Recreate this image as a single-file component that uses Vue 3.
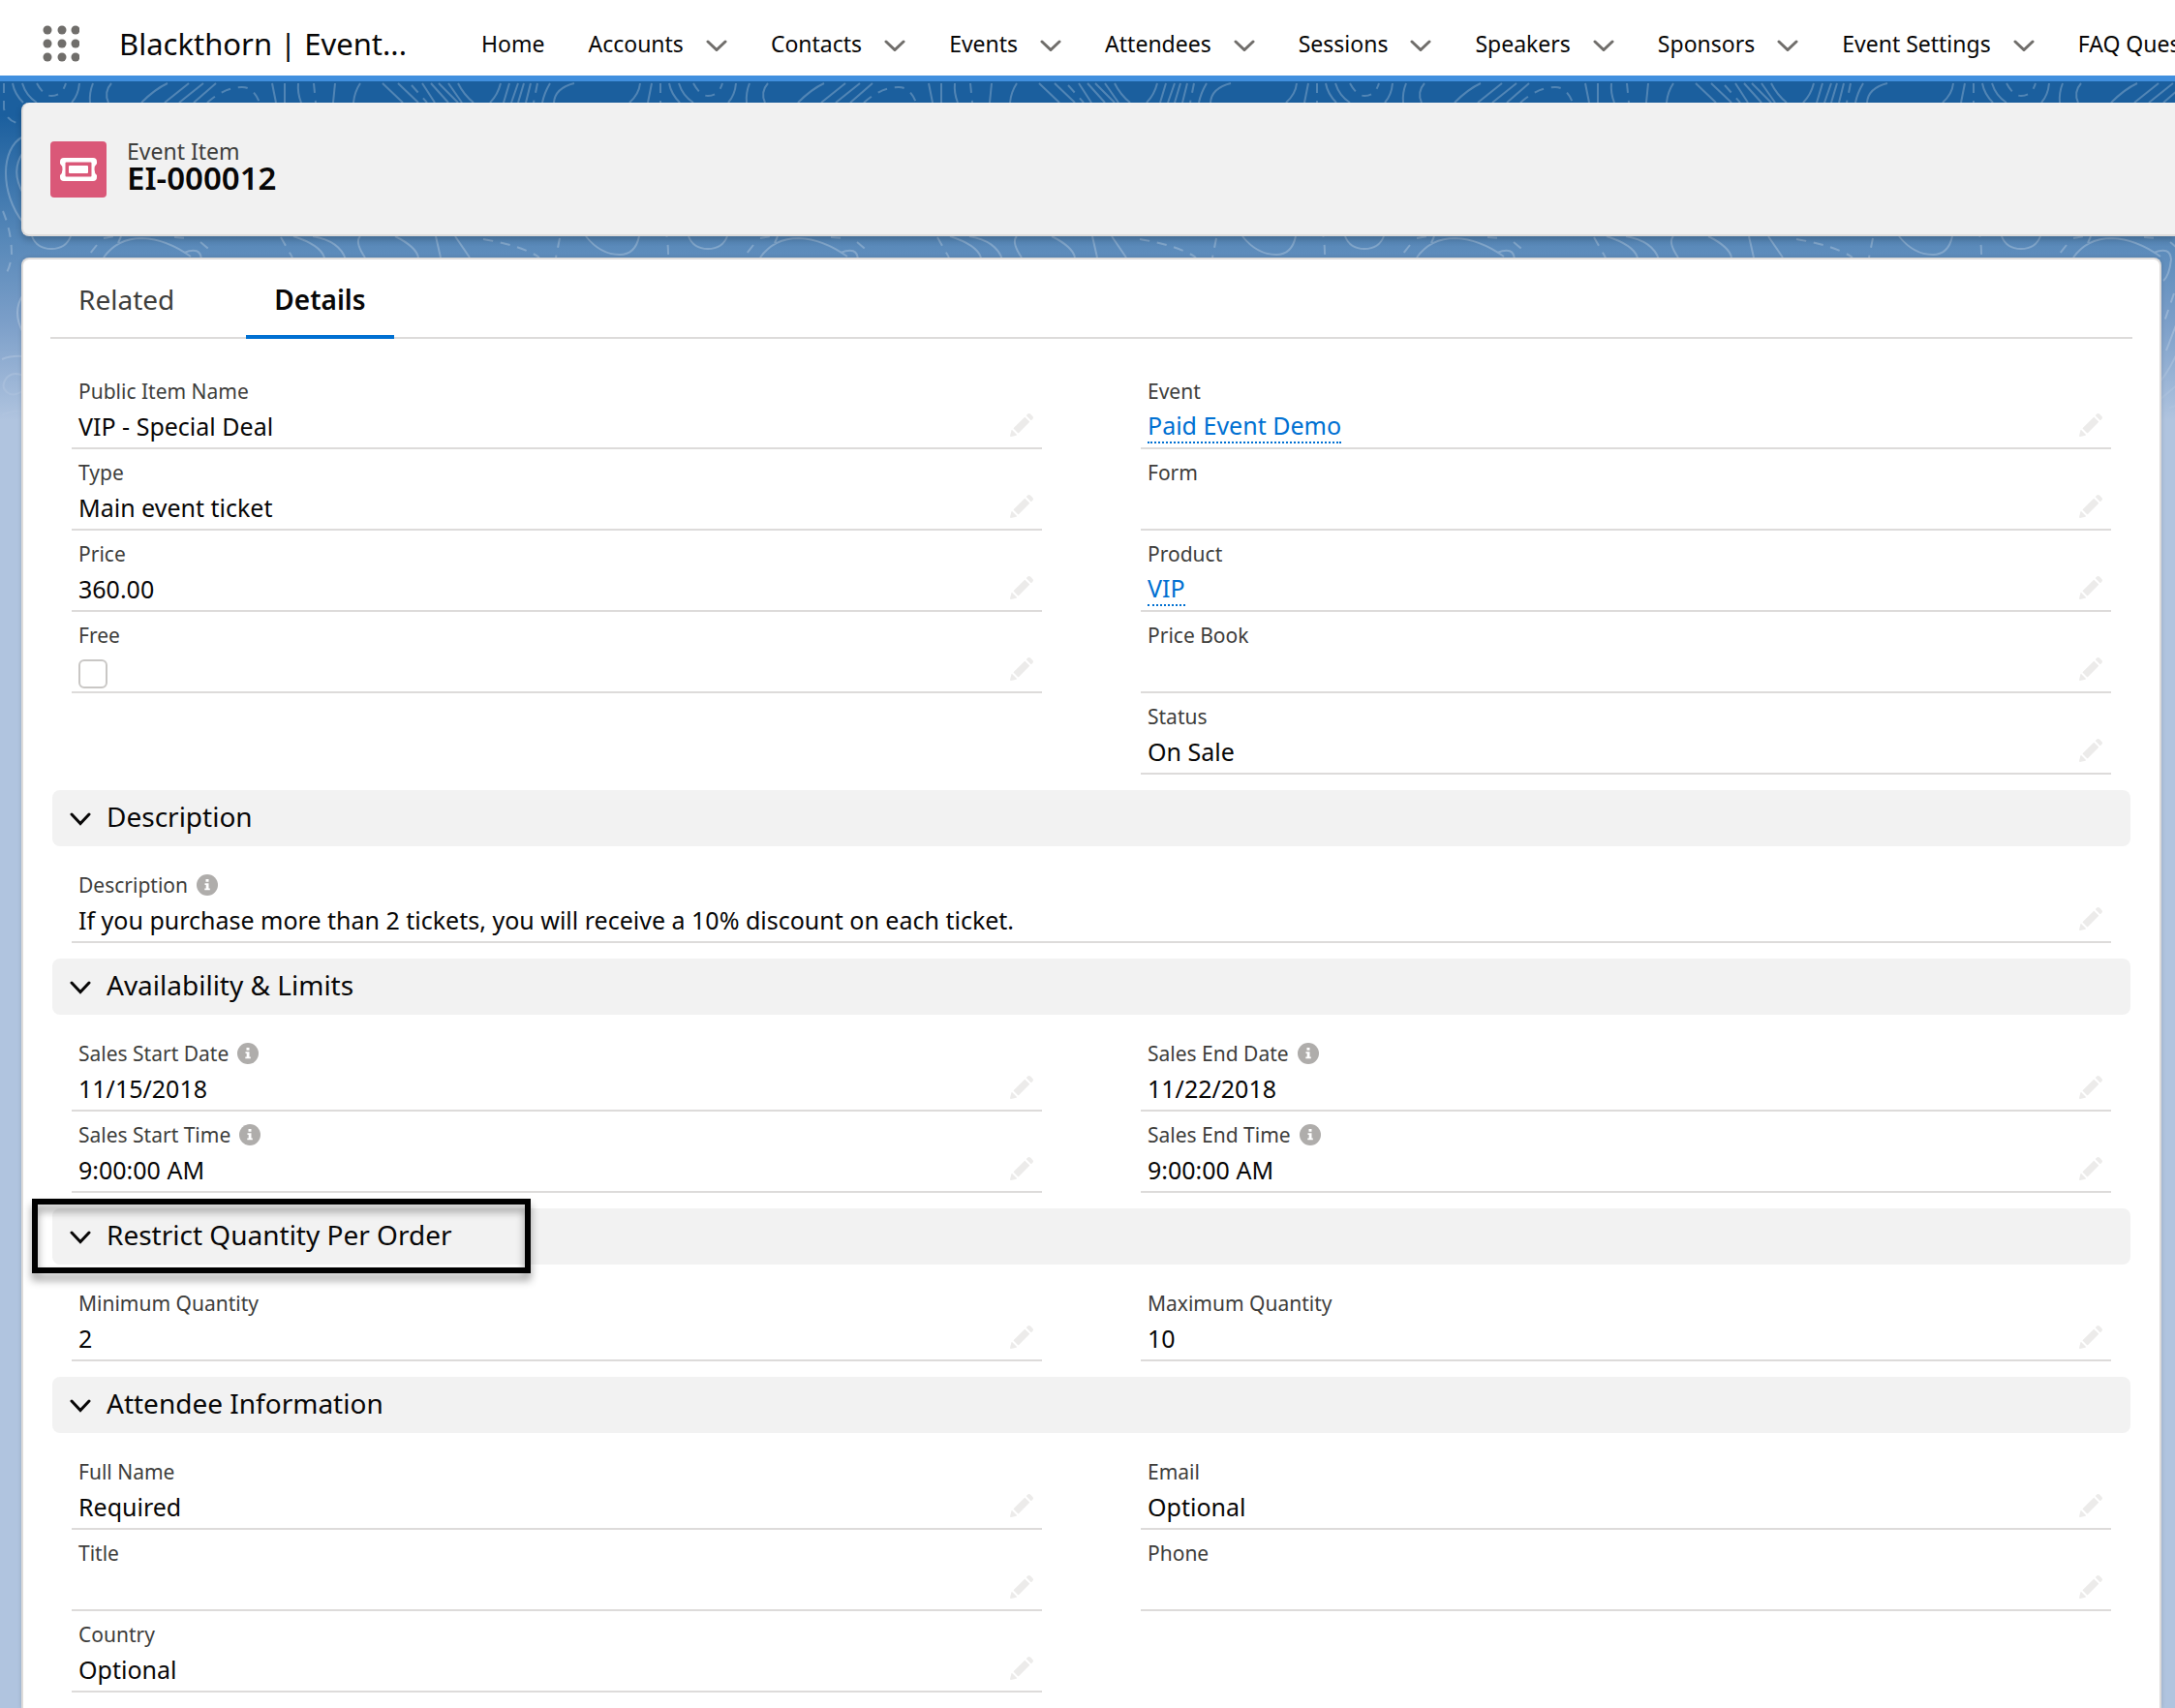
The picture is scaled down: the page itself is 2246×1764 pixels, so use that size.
<script setup>
import { ref } from 'vue'

const navItems = [
  { label: 'Home' },
  { label: 'Accounts', menu: true },
  { label: 'Contacts', menu: true },
  { label: 'Events', menu: true },
  { label: 'Attendees', menu: true },
  { label: 'Sessions', menu: true },
  { label: 'Speakers', menu: true },
  { label: 'Sponsors', menu: true },
  { label: 'Event Settings', menu: true },
  { label: 'FAQ Questions', menu: true },
]

const free = ref(false)

const sections = [
  {
    columns: [
      [
        { label: 'Public Item Name', value: 'VIP - Special Deal' },
        { label: 'Type', value: 'Main event ticket' },
        { label: 'Price', value: '360.00' },
        { label: 'Free', kind: 'checkbox' },
      ],
      [
        { label: 'Event', value: 'Paid Event Demo', kind: 'link' },
        { label: 'Form' },
        { label: 'Product', value: 'VIP', kind: 'link' },
        { label: 'Price Book' },
        { label: 'Status', value: 'On Sale' },
      ],
    ],
  },
  {
    title: 'Description',
    columns: [
      [
        {
          label: 'Description',
          info: true,
          value: 'If you purchase more than 2 tickets, you will receive a 10% discount on each ticket.',
        },
      ],
    ],
  },
  {
    title: 'Availability & Limits',
    columns: [
      [
        { label: 'Sales Start Date', info: true, value: '11/15/2018' },
        { label: 'Sales Start Time', info: true, value: '9:00:00 AM' },
      ],
      [
        { label: 'Sales End Date', info: true, value: '11/22/2018' },
        { label: 'Sales End Time', info: true, value: '9:00:00 AM' },
      ],
    ],
  },
  {
    title: 'Restrict Quantity Per Order',
    highlighted: true,
    columns: [
      [{ label: 'Minimum Quantity', value: '2' }],
      [{ label: 'Maximum Quantity', value: '10' }],
    ],
  },
  {
    title: 'Attendee Information',
    columns: [
      [
        { label: 'Full Name', value: 'Required' },
        { label: 'Title' },
        { label: 'Country', value: 'Optional' },
      ],
      [
        { label: 'Email', value: 'Optional' },
        { label: 'Phone' },
      ],
    ],
  },
]
</script>

<template>
  <div class="app">
    <header class="nav">
      <button class="launcher" aria-label="App Launcher">
        <svg viewBox="0 0 38 38">
          <g v-for="y in [5, 19, 33]" :key="y">
            <circle v-for="x in [5, 20, 34]" :key="x" :cx="x" :cy="y" r="4.5" />
          </g>
        </svg>
      </button>
      <span class="app-name">Blackthorn | Event...</span>
      <nav class="nav-items">
        <div v-for="item in navItems" :key="item.label" class="nav-item">
          <a href="#">{{ item.label }}</a>
          <button v-if="item.menu" class="nav-menu" :aria-label="item.label + ' menu'">
            <svg viewBox="0 0 22 12"><path d="M2 2l9 8.5L20 2" /></svg>
          </button>
        </div>
      </nav>
    </header>

    <div class="page">
      <svg class="topography" aria-hidden="true">
        <defs>
          <pattern id="contours" width="678" height="380" patternUnits="userSpaceOnUse">
            <g class="contour" transform="translate(0 -84)">
              <path d="M13 86Q15 97 24 106M23 86Q27 99 38 106M82 86Q81 98 74 106M96 86Q92 96 93 106M115 86Q107 95 112 106M173 86Q160 92 146 106M195 86L170 106M210 86L185 106M223 86L200 106M281 86L285 106M294 86V106M308 86Q307 96 311 106M346 86L344 106M372 86Q366 95 365 106M395 86L416 106M411 86L432 106M436 86L449 106M445 86L463 106M453 86L473 106M463 86L477 106M473 86Q479 98 489 106M517 86Q514 98 506 106M526 86L520 106M535 86L528 106M541 86L535 106M548 86L543 106M568 86Q562 96 560 106M593 86Q573 91 572 106M661 86Q660 97 650 106M673 86L669 106" />
              <path class="dashed" d="M4 86V112Q7 127 24 128M38 86Q45 99 53 99Q64 99 68 86M214 106Q232 90 250 90Q262 90 268 106M324 86L326 106M425 88L441 106M555 86L551 106M681 86V106" />
              <path d="M33 244Q38 257 53 257Q68 257 73 244M107 266Q121 246 147 246Q172 247 197 265M190 261Q207 254 208 268Q206 285 200 290M303 244Q331 253 335 266M323 244Q351 249 357 268M372 244Q366 250 377 266M408 244Q430 255 432 266M450 244L455 266M470 244L485 266M605 244Q620 263 640 263Q656 263 660 244M125 244L122 251" />
              <path class="dashed" d="M100 253L92 263M107 246L118 244M180 245L195 246M207 250L219 260M290 245L302 266M499 247Q540 254 557 266M578 246L574 266M682 246V266" />
              <path d="M24 141C0 153 0 200 24 230M24 157C13 173 17 188 24 200M24 304Q12 322 24 344M2 371Q12 367 24 368M24 388Q14 383 7 390Q0 399 7 405Q14 411 24 403M2 429Q12 423 24 425M216 328L203 362M216 360Q208 380 196 395M216 396L196 413" />
              <path class="dashed" d="M3 218Q12 240 12 262Q11 277 4 286M211 303L201 332M216 418L198 424" />
            </g>
          </pattern>
          <linearGradient id="fade" x1="0" y1="0" x2="0" y2="1">
            <stop offset="0.7" stop-color="#fff" />
            <stop offset="1" stop-color="#fff" stop-opacity="0" />
          </linearGradient>
          <mask id="fadeMask"><rect width="100%" height="360" fill="url(#fade)" /></mask>
        </defs>
        <rect width="100%" height="360" fill="url(#contours)" mask="url(#fadeMask)" />
      </svg>

      <section class="record-header">
        <span class="record-icon">
          <svg viewBox="0 0 38 24">
            <path
              fill-rule="evenodd"
              d="M4 0H34Q38 0 38 4V6Q35.500 8 35.500 12T38 18V20Q38 24 34 24H4Q0 24 0 20V18Q2.500 16 2.500 12T0 6V4Q0 0 4 0ZM6.500 4.500Q5.500 4.500 5.500 5.500V18.500Q5.500 19.500 6.500 19.500H31.500Q32.500 19.500 32.500 18.500V5.500Q32.500 4.500 31.500 4.500Z"
            />
            <rect x="9" y="8" width="20" height="8" rx="1" />
          </svg>
        </span>
        <div>
          <p class="record-type">Event Item</p>
          <h1>EI-000012</h1>
        </div>
      </section>

      <main class="card">
        <div class="tabs" role="tablist">
          <button class="tab" role="tab">Related</button>
          <button class="tab active" role="tab" aria-selected="true">Details</button>
        </div>

        <div class="details">
          <section v-for="(section, s) in sections" :key="s">
            <h2 v-if="section.title" class="section-title">
              <button>
                <svg viewBox="0 0 22 14"><path d="M2 2l9 9.500L20 2" /></svg>
                {{ section.title }}
              </button>
              <span v-if="section.highlighted" class="highlight"></span>
            </h2>
            <div class="columns">
              <dl v-for="(column, c) in section.columns" :key="c">
                <div v-for="field in column" :key="field.label" class="field">
                  <dt>
                    <label v-if="field.kind === 'checkbox'" for="free">{{ field.label }}</label>
                    <template v-else>{{ field.label }}</template>
                    <svg v-if="field.info" class="info" viewBox="0 0 22 22">
                      <circle cx="11" cy="11" r="11" />
                      <path d="M9.500 5h3v2.800h-3zM8.500 9.300h4v5.200h1.300v1.800H8.300v-1.800h1.400v-3.400H8.500z" />
                    </svg>
                  </dt>
                  <dd>
                    <input v-if="field.kind === 'checkbox'" id="free" v-model="free" type="checkbox" />
                    <a v-else-if="field.kind === 'link'" href="#">{{ field.value }}</a>
                    <span v-else>{{ field.value }}</span>
                    <button class="edit" :aria-label="'Edit ' + field.label">
                      <svg viewBox="0 0 52 52">
                        <path
                          d="M9.5 33.4l8.9 8.9c.4.4 1 .4 1.4 0L42 20c.4-.4.4-1 0-1.4l-8.8-8.8c-.4-.4-1-.4-1.4 0L9.500 32.100c-.4.4-.4 1 0 1.300zM36.100 5.700c-.4.4-.4 1 0 1.400l8.800 8.800c.4.4 1 .4 1.400 0l2.500-2.500c1.600-1.500 1.600-3.900 0-5.500l-4.700-4.700c-1.600-1.600-4.100-1.600-5.700 0l-2.300 2.500zM2.100 48.200c-.2 1 .7 1.900 1.700 1.700l10.900-2.600c.4-.1.7-.3.9-.5l.2-.2c.2-.2.3-.9-.1-1.300l-9-9c-.4-.4-1.100-.3-1.300-.1l-.2.2c-.3.3-.4.6-.5.9L2.100 48.200z"
                        />
                      </svg>
                    </button>
                  </dd>
                </div>
              </dl>
            </div>
          </section>
        </div>
      </main>
    </div>
  </div>
</template>

<style>
html,
body {
  overflow: hidden;
}
</style>

<style scoped>
.app {
  display: flex;
  flex-direction: column;
  min-height: 100vh;
  overflow: hidden;
  font-family: 'Noto Sans', 'Open Sans', sans-serif;
  color: #080707;
}
* {
  box-sizing: border-box;
}
button {
  margin: 0;
  padding: 0;
  border: 0;
  background: none;
  font: inherit;
  color: inherit;
}
svg {
  display: block;
}

.nav {
  display: flex;
  align-items: center;
  height: 84px;
  padding: 12px 0 0 44px;
  background: #fff;
  border-bottom: 6px solid #418fde;
}
.launcher {
  flex: none;
  width: 38px;
  height: 38px;
  fill: #706e6b;
}
.app-name {
  flex: none;
  width: 374px;
  margin-left: 41px;
  font-size: 31px;
  line-height: 40px;
  white-space: nowrap;
}
.nav-items {
  display: flex;
  gap: 45px;
}
.nav-item {
  display: flex;
  flex: none;
  align-items: center;
  gap: 23px;
  font-size: 23px;
  line-height: 32px;
  white-space: nowrap;
}
.nav-item a {
  color: inherit;
  text-decoration: none;
}
.nav-menu {
  width: 22px;
  padding-top: 4px;
}
.nav-menu path {
  fill: none;
  stroke: #706e6b;
  stroke-width: 3;
  stroke-linecap: round;
}

.page {
  position: relative;
  display: flex;
  flex: 1;
  flex-direction: column;
  gap: 22px;
  padding: 22px 0 0 22px;
  background: linear-gradient(#1b5f9e 0, #1b5f9e 35px, #5a8aba 170px, #7c9fc9 250px, #b0c4df 350px);
}
.topography {
  position: absolute;
  inset: 0;
  width: 100%;
  height: 360px;
}
.contour {
  fill: none;
  stroke: #fff;
  stroke-opacity: 0.24;
  stroke-width: 2;
}
.dashed {
  stroke-dasharray: 10 8;
}

.record-header {
  position: relative;
  display: flex;
  gap: 21px;
  padding: 40px 28px 38px;
  background: #f1f1f1;
  border: solid #dddbda;
  border-width: 0 0 2px 2px;
  border-radius: 8px 0 0 8px;
  box-shadow: 0 4px 6px rgba(0, 0, 0, 0.2);
}
.record-icon {
  display: grid;
  place-items: center;
  width: 58px;
  height: 58px;
  border-radius: 4px;
  background: #da5878;
}
.record-icon svg {
  width: 38px;
  fill: #fff;
}
.record-type {
  margin: -4px 0 0;
  font-size: 23px;
  line-height: 28px;
  color: #3e3e3c;
}
h1 {
  margin: 0;
  font-size: 33px;
  font-weight: 600;
  line-height: 28px;
}

.card {
  position: relative;
  flex: 1;
  margin-right: 14px;
  padding: 0 28px;
  background: #fff;
  border: 2px solid #dddbda;
  border-bottom: 0;
  border-radius: 8px 8px 0 0;
  box-shadow: 0 0 4px rgba(0, 0, 0, 0.15);
}
.tabs {
  display: flex;
  gap: 45px;
  height: 82px;
  border-bottom: 2px solid #dddbda;
}
.tab {
  height: 82px;
  padding: 4px 29px 0;
  border-bottom: 4px solid transparent;
  font-size: 28px;
  color: #3e3e3c;
}
.tab.active {
  border-color: #0070d2;
  color: #080707;
  font-weight: 600;
}

.details {
  display: flex;
  flex-direction: column;
  gap: 16px;
  padding: 30px 0 0;
}
.section-title {
  position: relative;
  margin: 0 2px 16px;
  border-radius: 8px;
  background: #f2f2f2;
  font-size: 28px;
  font-weight: 400;
  line-height: 54px;
}
.section-title button {
  display: flex;
  gap: 16px;
  align-items: center;
  padding: 0 18px 4px;
}
.section-title svg {
  width: 22px;
  margin-top: 6px;
}
.section-title path {
  fill: none;
  stroke: #080707;
  stroke-width: 3;
  stroke-linecap: round;
}
.highlight {
  position: absolute;
  top: -10px;
  left: -21px;
  width: 515px;
  height: 77px;
  border: 6px solid #000;
  filter: drop-shadow(0 7px 4px rgba(0, 0, 0, 0.4));
}

.columns {
  display: flex;
  gap: 102px;
  padding: 0 22px;
}
dl {
  flex: 1;
  margin: 0;
}
.field {
  padding: 9px 8px 0 7px;
  border-bottom: 2px solid #dddbda;
}
dt {
  display: flex;
  align-items: center;
  gap: 9px;
  font-size: 21px;
  line-height: 30px;
  color: #3e3e3c;
}
.info {
  width: 22px;
}
.info circle {
  fill: #afadab;
}
.info path {
  fill: #fff;
}
dd {
  display: flex;
  align-items: center;
  justify-content: space-between;
  height: 43px;
  margin: 0;
  padding-bottom: 1px;
  font-size: 25px;
}
dd a {
  border-bottom: 2px dotted #0070d2;
  line-height: 34px;
  color: #0070d2;
  text-decoration: none;
}
input {
  appearance: none;
  width: 30px;
  height: 30px;
  margin: 8px 0 0;
  border: 2px solid #c9c7c5;
  border-radius: 6px;
  background: #fff;
}
.edit {
  width: 26px;
  margin: -2px 0 0 auto;
  fill: #ecebea;
}
</style>
